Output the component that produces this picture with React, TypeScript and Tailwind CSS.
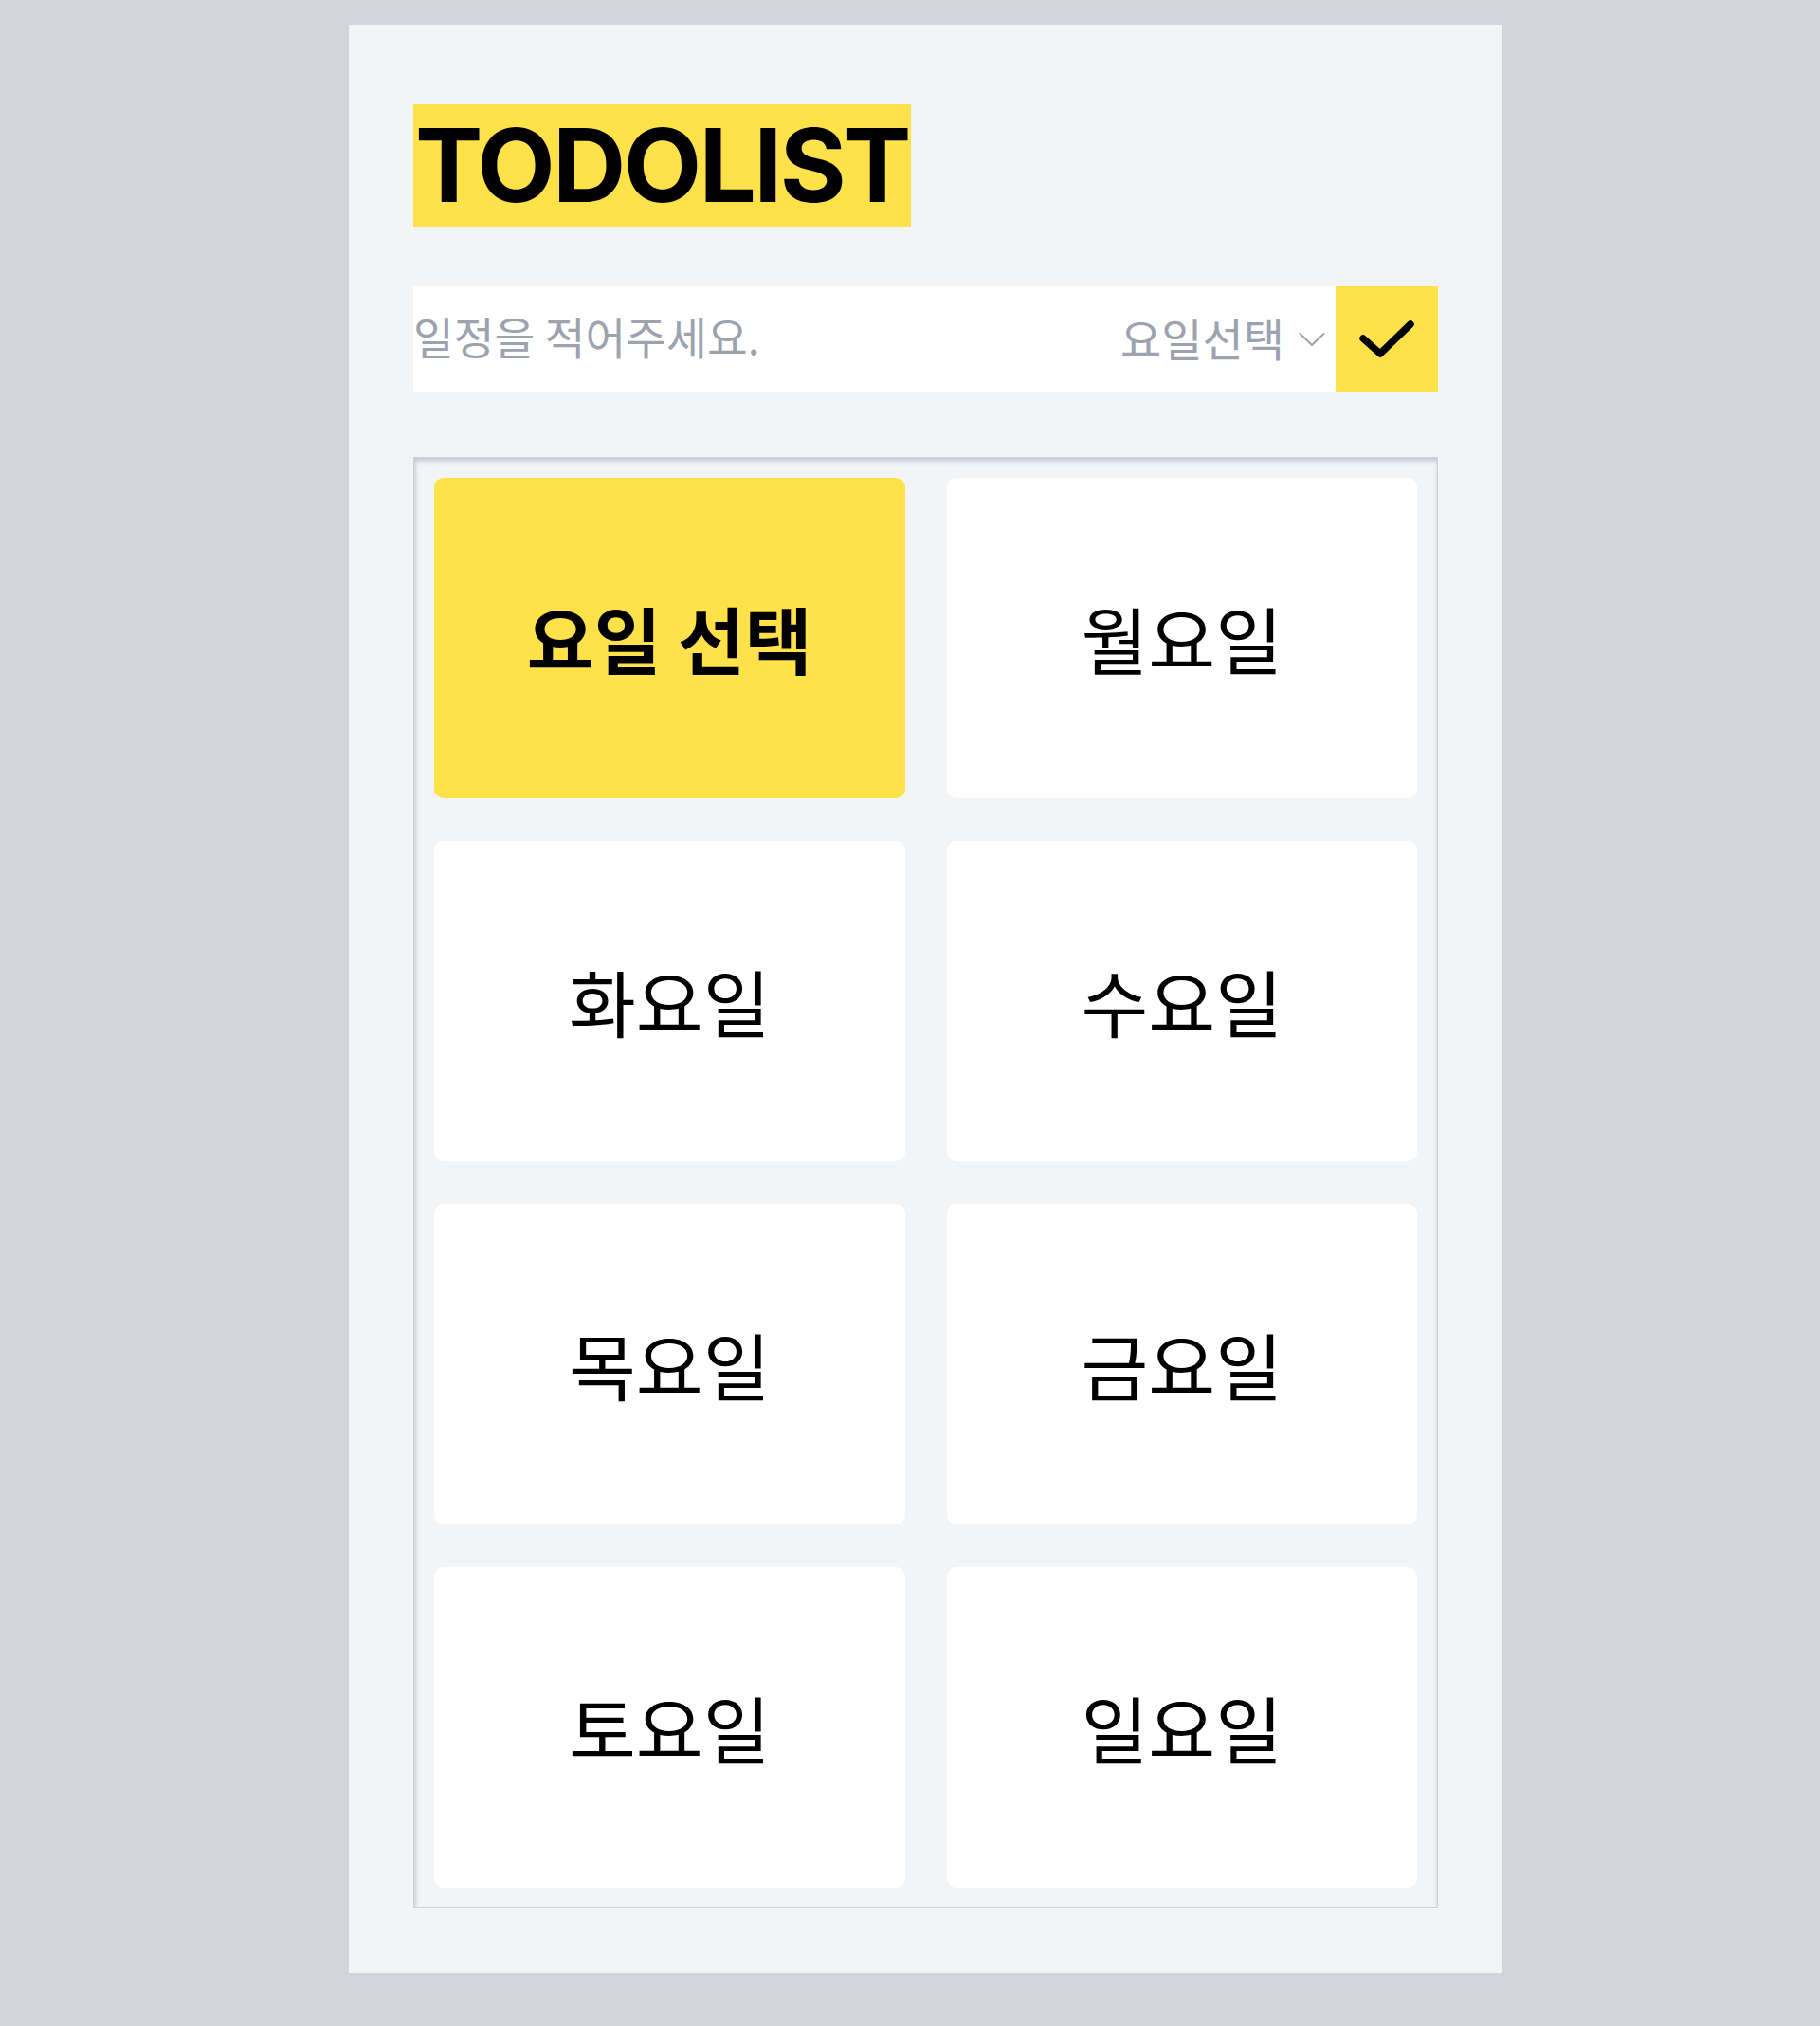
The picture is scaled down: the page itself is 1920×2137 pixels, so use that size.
import { useState } from "react";

const days = ["요일 선택", "월요일", "화요일", "수요일", "목요일", "금요일", "토요일", "일요일"];

const ko = "font-['Noto_Sans_CJK_KR','Noto_Sans',sans-serif]";

export default function App() {
  const [selected, setSelected] = useState(0);
  const [text, setText] = useState("");
  const [day, setDay] = useState("");

  return (
    <div className="min-h-[2137px] bg-[#d1d5db] pt-[26px] pb-[55px]">
      <div className="ml-[368px] w-[1217px] bg-[#f3f4f6] px-[68px] pt-[84px] pb-[68px]">
        <div className="flex">
          <h1 className="h-[129px] bg-[#ffe14a] pl-[2px] pr-[2px] font-['Inter',sans-serif] text-[107px] font-bold leading-[129px] tracking-[-0.025em] text-black">
            TODOLIST
          </h1>
        </div>

        <div className="mt-[63px] flex h-[111px]">
          <div className="flex flex-1 items-center bg-white">
            <input
              value={text}
              onChange={(e) => setText(e.target.value)}
              placeholder="일정을 적어주세요."
              className={`${ko} mb-[8px] min-w-0 flex-1 bg-transparent text-[46.5px] text-black outline-none placeholder:text-[#9ca3af]`}
            />
            <label className="flex items-center">
              <select
                value={day}
                onChange={(e) => setDay(e.target.value)}
                className={`${ko} mb-[2px] appearance-none bg-transparent p-0 text-[47px] text-[#9ca3af] outline-none`}
              >
                <option value="">요일선택</option>
                {days.slice(1).map((d) => (
                  <option key={d} value={d}>
                    {d}
                  </option>
                ))}
              </select>
              <svg width="28" height="16" viewBox="0 0 28 16" className="ml-[15px] mr-[11px]">
                <polyline points="1.5,2 14,14 26.5,2" fill="none" stroke="#9ca3af" strokeWidth="2" strokeLinecap="round" strokeLinejoin="round" />
              </svg>
            </label>
          </div>
          <button className="flex h-[111px] w-[108px] items-center justify-center bg-[#ffe14a]">
            <svg width="62" height="44" viewBox="0 0 62 44">
              <polyline points="6,21 24,37 56,6" fill="none" stroke="#000" strokeWidth="7.5" strokeLinecap="round" strokeLinejoin="round" />
            </svg>
          </button>
        </div>

        <div className="mt-[69px] grid grid-cols-2 gap-x-[44px] gap-y-[45px] border border-[#c9d0db] p-[21px] shadow-[inset_1px_3px_5px_rgba(100,116,139,0.35)]">
          {days.map((d, i) => (
            <button
              key={d}
              onClick={() => setSelected(i)}
              className={`${ko} flex h-[338px] items-center justify-center rounded-[10px] text-[77px] text-black ${
                selected === i ? "bg-[#ffe14a] font-bold" : "bg-white font-normal"
              }`}
            >
              {d}
            </button>
          ))}
        </div>
      </div>
    </div>
  );
}
